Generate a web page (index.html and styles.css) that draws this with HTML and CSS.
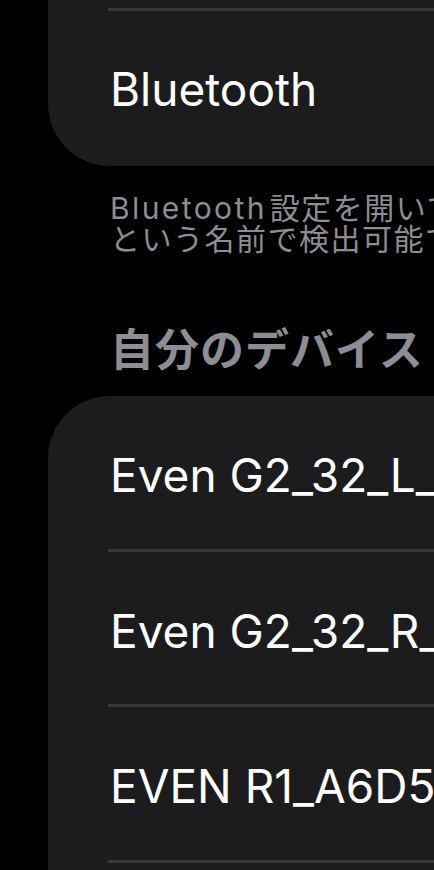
FILE: index.html
```html
<!DOCTYPE html>
<html lang="ja">
<head>
<meta charset="utf-8">
<title>Bluetooth</title>
<link rel="stylesheet" href="styles.css">
</head>
<body>
<div class="page">
  <section class="card card-top">
    <div class="row-clip"></div>
    <div class="sep"></div>
    <div class="row"><span class="label">Bluetooth</span></div>
  </section>
  <p class="footer"><span class="latin">Bluetooth</span>設定を開いている間、“iPhone”<br>という名前で検出可能です。</p>
  <h2 class="header">自分のデバイス</h2>
  <section class="card card-devices">
    <div class="row"><span class="label">Even G2_32_L_A1B2C3</span></div>
    <div class="sep"></div>
    <div class="row"><span class="label">Even G2_32_R_A1B2C3</span></div>
    <div class="sep"></div>
    <div class="row"><span class="label">EVEN R1_A6D5</span></div>
    <div class="sep"></div>
    <div class="row"><span class="label">AirPods</span></div>
  </section>
</div>
</body>
</html>
```

FILE: styles.css
```css
html, body {
  margin: 0;
  padding: 0;
  background: #000;
  overflow: hidden;
  height: 870px;
}
.page {
  padding-left: 48px;
  width: 1000px;
  font-family: Inter, "Noto Sans CJK JP", sans-serif;
  color: #fff;
}
.card {
  background: #1c1c1e;
  width: 952px;
  overflow: hidden;
}
.card-top {
  border-radius: 0 0 62px 62px;
}
.card-devices {
  margin-top: 20px;
  border-radius: 62px 62px 0 0;
}
.row-clip {
  height: 8px;
}
.sep {
  height: 3px;
  margin-left: 60px;
  background: #38383a;
}
.row {
  height: 155px;
  display: flex;
  align-items: center;
  padding-left: 62px;
}
.card-devices .row {
  height: 152.5px;
  padding-top: 6px;
  box-sizing: border-box;
}
.label {
  font-size: 46px;
  line-height: 56px;
  white-space: nowrap;
}
.footer {
  margin: 27px 0 0 0;
  padding-left: 62px;
  font-size: 30px;
  line-height: 31px;
  letter-spacing: 1.5px;
  color: #8d8d93;
  white-space: nowrap;
}
.latin {
  letter-spacing: 2.4px;
  margin-right: 3px;
}
.header {
  margin: 69px 0 0 0;
  padding-left: 62px;
  font-size: 44px;
  line-height: 52px;
  font-weight: 700;
  letter-spacing: 1px;
  color: #8d8d93;
  white-space: nowrap;
}
```
